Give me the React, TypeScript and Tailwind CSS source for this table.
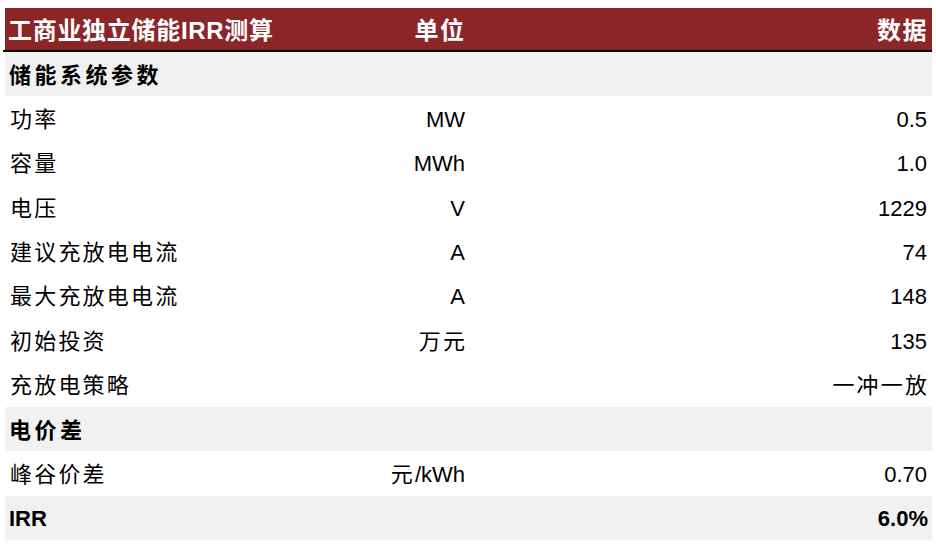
import * as React from "react";

type Row =
  | { kind: "section"; label: string }
  | { kind: "item"; label: string; unit: string; value: string }
  | { kind: "total"; label: string; value: string };

const rows: Row[] = [
  { kind: "section", label: "储能系统参数" },
  { kind: "item", label: "功率", unit: "MW", value: "0.5" },
  { kind: "item", label: "容量", unit: "MWh", value: "1.0" },
  { kind: "item", label: "电压", unit: "V", value: "1229" },
  { kind: "item", label: "建议充放电电流", unit: "A", value: "74" },
  { kind: "item", label: "最大充放电电流", unit: "A", value: "148" },
  { kind: "item", label: "初始投资", unit: "万元", value: "135" },
  { kind: "item", label: "充放电策略", unit: "", value: "一冲一放" },
  { kind: "section", label: "电价差" },
  { kind: "item", label: "峰谷价差", unit: "元/kWh", value: "0.70" },
  { kind: "total", label: "IRR", value: "6.0%" },
];

const font = "font-['Liberation_Sans','Noto_Sans_CJK_SC',sans-serif]";
const hasCjk = (s: string) => /[\u4e00-\u9fff]/.test(s);

function Cjk({ text, right }: { text: string; right?: boolean }) {
  // CJK glyphs in the sheet are spaced wider than the latin ones
  if (!hasCjk(text)) return <span>{text}</span>;
  return (
    <span className={right ? "tracking-[2.2px] mr-[-2.2px]" : "tracking-[2.2px]"}>{text}</span>
  );
}

export default function App() {
  return (
    <div className={`w-[936px] h-[548px] bg-white pt-2 text-black ${font}`}>
      <div className="ml-[5px] w-[927px]">
        <div className="grid grid-cols-[295px_166px_1fr] h-[42px] items-center bg-[#8b2628] text-white font-bold text-[24px] pt-[4px]">
          <span className="pl-[3px] tracking-[0.7px]">工商业独立储能IRR测算</span>
          <span className="text-right tracking-[1.5px] mr-[-1.5px] pr-[2px]">单位</span>
          <span className="text-right tracking-[1.5px] pr-[4px]">数据</span>
        </div>
        <div className="h-[2px] bg-black ml-[-2px]" />
        {rows.map((r, i) => {
          if (r.kind === "section") {
            return (
              <div key={i} className="h-[44.36px] flex items-center bg-[#f1f1f1] pl-[4px] pt-[2px] text-[22px] font-bold">
                <span className="tracking-[3.5px]">{r.label}</span>
              </div>
            );
          }
          if (r.kind === "total") {
            return (
              <div key={i} className="h-[44.36px] grid grid-cols-[295px_166px_1fr] items-center bg-[#f1f1f1] pt-[2px] text-[22px] font-bold">
                <span className="pl-[4px]">{r.label}</span>
                <span />
                <span className="text-right pr-[4px]">{r.value}</span>
              </div>
            );
          }
          return (
            <div key={i} className="h-[44.36px] grid grid-cols-[295px_166px_1fr] items-center bg-white pt-[2px] text-[22px]">
              <span className="pl-[5px]">
                <Cjk text={r.label} />
              </span>
              <span className="text-right pr-[1px]">
                {r.unit === "元/kWh" ? (
                  <span>
                    <span className="tracking-[2.2px]">元</span>/kWh
                  </span>
                ) : (
                  <Cjk text={r.unit} right />
                )}
              </span>
              <span className="text-right pr-[5px]">
                <Cjk text={r.value} right />
              </span>
            </div>
          );
        })}
      </div>
    </div>
  );
}
